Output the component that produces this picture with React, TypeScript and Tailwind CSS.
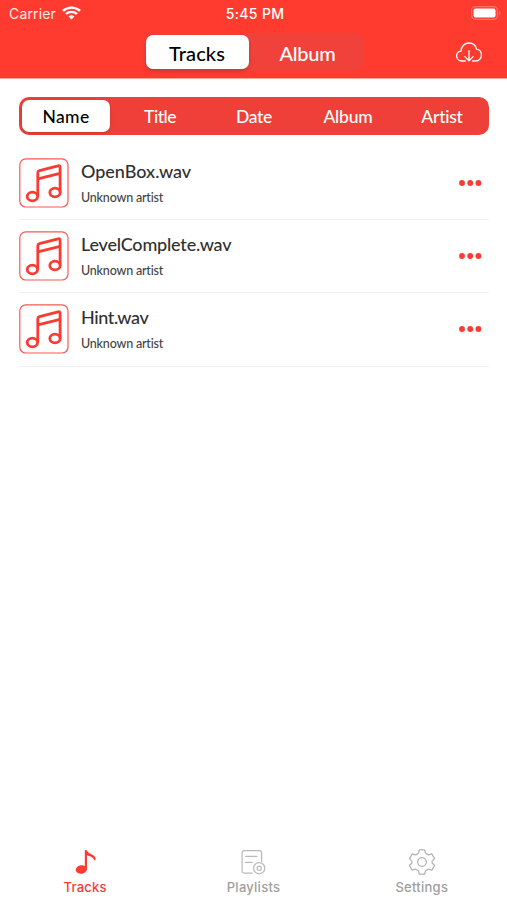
import { useState } from "react";

const FILTERS = [
  { label: "Name", spacing: "tracking-[0.4px]" },
  { label: "Title", spacing: "tracking-[-0.5px]" },
  { label: "Date", spacing: "tracking-[-0.35px]" },
  { label: "Album", spacing: "tracking-[-0.2px]" },
  { label: "Artist", spacing: "tracking-[-0.25px]" },
];

const TRACKS = [
  { name: "OpenBox.wav", artist: "Unknown artist", spacing: "tracking-[-0.02px]" },
  { name: "LevelComplete.wav", artist: "Unknown artist", spacing: "tracking-[-0.2px]" },
  { name: "Hint.wav", artist: "Unknown artist", spacing: "tracking-[-0.4px]" },
];

function WifiIcon() {
  return (
    <svg width="19" height="14" viewBox="0 0 18 14" preserveAspectRatio="none" fill="none" stroke="white" strokeWidth={2.3}>
      <path d="M0.9 4.9a11.6 11.6 0 0 1 16.2 0" />
      <path d="M3.8 8a7.4 7.4 0 0 1 10.4 0" />
      <path d="M6.2 10.6a4 4 0 0 1 5.6 0L9 13.5z" fill="white" stroke="none" />
    </svg>
  );
}

function BatteryIcon() {
  return (
    <svg width="30" height="14" viewBox="0 0 30 14">
      <rect x="0.6" y="0.6" width="25.8" height="12.8" rx="3.8" fill="none" stroke="white" strokeOpacity={0.3} strokeWidth={1.1} />
      <rect x="2.5" y="2.5" width="22" height="9" rx="2" fill="white" />
      <path d="M27.9 5v4.2c1.9-.7 1.9-3.5 0-4.2z" fill="white" fillOpacity={0.35} />
    </svg>
  );
}

function CloudDownloadIcon() {
  return (
    <svg width="28" height="22" viewBox="0 0 28 22" fill="none" stroke="white" strokeWidth={1.3} strokeLinecap="round" strokeLinejoin="round">
      <path d="M10.3 20H7C3.8 20 1.6 17.9 1.6 15.1c0-2.7 1.9-4.7 4.4-5C6.3 5.4 9.6 2 13.9 2c3.8 0 6.9 2.5 7.6 6.2 2.9.4 4.9 2.9 4.9 5.8 0 3.4-2.4 6-5.6 6h-3.1" />
      <path d="M14 9.6v10M9.9 15.6l4.1 4.2 4.1-4.2" />
    </svg>
  );
}

function NotesIcon() {
  return (
    <svg width="50" height="50" viewBox="0 0 50 50" fill="none" stroke="#f93b34">
      <rect x="0.8" y="0.8" width="48.2" height="48.2" rx="6" strokeWidth={1.2} strokeOpacity={0.85} />
      <g strokeWidth={2.8} strokeLinejoin="round">
        <path d="M18.8 38.2V14.8c0-1.2.6-1.800 1.700-2.100L39 7.900c1.400-.4 2.100.1 2.100 1.500v25.100" />
        <path d="M18.8 20.9 41.1 15.4" />
        <ellipse cx="13.4" cy="38.5" rx="5.2" ry="4.3" />
        <ellipse cx="36" cy="34.5" rx="5.2" ry="4.3" />
      </g>
    </svg>
  );
}

function NoteTabIcon() {
  return (
    <svg width="28" height="28" viewBox="0 0 28 28" fill="#f93b34">
      <ellipse cx="10.3" cy="21.5" rx="5.6" ry="4.2" transform="rotate(-10 10.3 21.5)" />
      <path d="M13.8 22V2.7c0-1 1.700-1.100 2.100-.2 1.300 2.900 4.700 3.200 6.800 5.100 1.500 1.300 2.200 2.900 1.900 4.200-.2.700-1 .8-1.300.1-1.300-2.800-4.900-3.700-7.300-4.600V22z" />
    </svg>
  );
}

function PlaylistTabIcon() {
  return (
    <svg width="28" height="28" viewBox="0 0 28 28" fill="none" stroke="#b9b9b9" strokeWidth={1.2} strokeLinecap="round" strokeLinejoin="round">
      <path d="M13.2 25.2H5.4c-1.4 0-2.3-.9-2.3-2.3V5c0-1.4.9-2.3 2.3-2.3h14.9c1.4 0 2.3.9 2.3 2.3v8.6" />
      <path d="M6.6 8.4h11.5M6.6 14.3h6.600" />
      <circle cx="20.2" cy="20.2" r="5.6" />
      <circle cx="20.2" cy="20.2" r="2.1" />
    </svg>
  );
}

function GearTabIcon() {
  return (
    <svg width="28" height="28" viewBox="0 0 28 28" fill="none" stroke="#b4b4b4" strokeWidth={1.3} strokeLinejoin="round">
      <path d="M11.4 1.9h5.2l1 3.5 2.7 1.5 3.6-.9 2.7 4.6-2.5 2.5v1.9l2.5 2.5-2.7 4.6-3.6-.9-2.7 1.5-1 3.5h-5.200l-1-3.500-2.700-1.500-3.600.9-2.700-4.600 2.500-2.500v-1.900l-2.500-2.500L4.100 6l3.600.9 2.700-1.500z" />
      <circle cx="14" cy="14" r="4.3" />
    </svg>
  );
}

function MoreIcon() {
  return (
    <svg width="24" height="8" viewBox="0 0 24 8" fill="#f93b34">
      <circle cx="4" cy="4" r="2.9" />
      <circle cx="12.2" cy="4" r="2.9" />
      <circle cx="20.4" cy="4" r="2.9" />
    </svg>
  );
}

export default function App() {
  const [view, setView] = useState("Tracks");
  const [filter, setFilter] = useState("Name");

  return (
    <div className="flex h-[900px] w-[507px] flex-col bg-white font-[Lato,sans-serif]">
      <header className="h-[79px] border-b border-[#ffa99b] bg-[#ff3b30]">
        {/* Status bar */}
        <div className="grid h-[26px] grid-cols-3 items-center pr-[6px] pl-[9px] font-[Inter,sans-serif] text-white">
          <div className="flex items-center gap-[6px]">
            <span className="pt-px text-[14px] tracking-[0.15px] opacity-90">Carrier</span>
            <WifiIcon />
          </div>
          <span className="pt-px text-center text-[14px] font-medium tracking-[0.35px]">5:45 PM</span>
          <div className="flex justify-end">
            <BatteryIcon />
          </div>
        </div>

        {/* View switch + import */}
        <div className="grid grid-cols-[1fr_220px_1fr] items-center pt-[7px]">
          <div className="col-start-2 flex h-[38px] rounded-[9px] bg-[#f0423a] p-[2px]">
            {["Tracks", "Album"].map((v) => (
              <button
                key={v}
                onClick={() => setView(v)}
                className={
                  view === v
                    ? "mr-[5px] w-[103px] rounded-[7px] bg-white pt-px text-[20px] font-medium tracking-[0.1px] text-black shadow-[0_2px_4px_rgba(0,0,0,0.18)]"
                    : "flex-1 pt-px text-[20px] font-medium tracking-[-0.3px] text-white"
                }
              >
                {v}
              </button>
            ))}
          </div>
          <button className="mr-[24px] justify-self-end" aria-label="Import">
            <CloudDownloadIcon />
          </button>
        </div>
      </header>

      <main className="flex-1 pt-[18px] pr-[18px] pl-[19px]">
        <div className="flex h-[38px] rounded-[10px] bg-[#ee4038]">
          {FILTERS.map((f) => (
            <button
              key={f.label}
              onClick={() => setFilter(f.label)}
              className={`${f.spacing} ${
                filter === f.label
                  ? "m-[3px] w-[88px] rounded-[7px] bg-white pt-[3px] text-[17.5px] font-medium text-black shadow-[0_1px_3px_rgba(0,0,0,0.18)]"
                  : "w-[94px] pt-[3px] text-[17.5px] font-medium text-white"
              }`}
            >
              {f.label}
            </button>
          ))}
        </div>

        <ul className="mt-[11.5px]">
          {TRACKS.map((t) => (
            <li key={t.name} className="flex h-[73.4px] items-center border-b border-[#f0f0f0]">
              <NotesIcon />
              <div className="ml-[12px] flex-1 pt-[2px]">
                <p className={`text-[18px] leading-[24px] font-medium text-[#303030] ${t.spacing}`}>{t.name}</p>
                <p className="mt-[4px] text-[12.5px] leading-[22px] font-medium tracking-[-0.2px] text-[#444444]">{t.artist}</p>
              </div>
              <button className="mr-[7px]" aria-label="More">
                <MoreIcon />
              </button>
            </li>
          ))}
        </ul>
      </main>

      <nav className="grid h-[52px] grid-cols-3 px-px font-[Inter,sans-serif] text-[13px] font-medium tracking-[0.25px] text-[#a0a0a0]">
        <button className="flex flex-col items-center gap-[3px] text-[#f93b34]">
          <NoteTabIcon />
          <span className="leading-[16px]">Tracks</span>
        </button>
        <button className="flex flex-col items-center gap-[3px]">
          <PlaylistTabIcon />
          <span className="leading-[16px]">Playlists</span>
        </button>
        <button className="flex flex-col items-center gap-[3px]">
          <GearTabIcon />
          <span className="leading-[16px]">Settings</span>
        </button>
      </nav>
    </div>
  );
}
